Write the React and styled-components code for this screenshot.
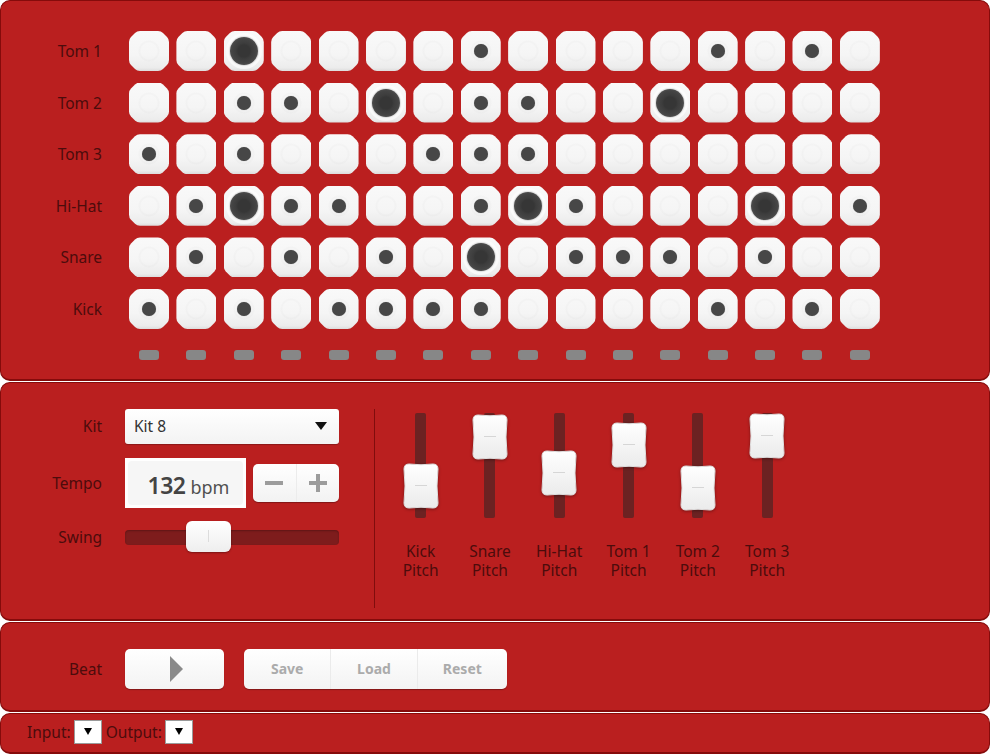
import React from "react"
import styled, { createGlobalStyle } from "styled-components"

const GlobalStyle = createGlobalStyle`
  body {
    margin: 0;
    background: #fff;
    font-family: "Noto Sans", "Open Sans", sans-serif;
  }
`

const Page = styled.div`
  width: 990px;
  display: flex;
  flex-direction: column;
  gap: 1px;
`

const Panel = styled.div`
  background: #ba1f1f;
  border: 1px solid #850b0b;
  border-bottom-width: 2px;
  border-radius: 10px;
  box-sizing: border-box;
  padding: ${p => p.pad};
`

const Label = styled.div`
  width: ${p => p.w || 101}px;
  text-align: right;
  font-size: 15.5px;
  color: #4c0c0c;
  flex-shrink: 0;
`

/* ---------- sequencer ---------- */

const Grid = styled.div`
  display: flex;
  flex-direction: column;
  gap: 11.6px;
`

const Row = styled.div`
  display: flex;
  align-items: center;
  gap: 27px;
`

const Pads = styled.div`
  display: flex;
  gap: 7.4px;
`

const Pad = styled.div`
  width: 40px;
  height: 40px;
  display: flex;
  align-items: center;
  justify-content: center;
  clip-path: path("M11 0 H29 Q32 0 34 2 L38 6 Q40 8 40 11 V29 Q40 32 38 34 L34 38 Q32 40 29 40 H11 Q8 40 6 38 L2 34 Q0 32 0 29 V11 Q0 8 2 6 L6 2 Q8 0 11 0 Z");
  background:
    radial-gradient(circle at 50% 50%, rgba(0,0,0,0) 0 8px, rgba(0,0,0,0.015) 9px 10px, rgba(0,0,0,0) 11px),
    linear-gradient(#f9f9f9 0%, #f5f5f5 60%, #ececec 92%, #dcdcdc 100%);
`

const Dot = styled.div`
  width: ${p => (p.big ? 28 : 14)}px;
  height: ${p => (p.big ? 28 : 14)}px;
  border-radius: 50%;
  background: ${p => (p.big
    ? "radial-gradient(circle, #363636 0 6px, #3d3d3d 8px, #444 12px, #4e4e4e 14px)"
    : "#474747")};
  box-shadow: ${p => (p.big
    ? "0 0 1px 1px rgba(0,0,0,0.12), 0 0 0 4px rgba(255,255,255,0.6)"
    : "0 0 1px rgba(0,0,0,0.4)")};
`

const Lights = styled.div`
  display: flex;
  gap: 7.4px;
  margin: 21px 0 0 128px;
`

const LightCell = styled.div`
  width: 40px;
  display: flex;
  justify-content: center;
`

const Light = styled.div`
  width: 20px;
  height: 10px;
  border-radius: 3px;
  background: #878787;
`

/* ---------- controls ---------- */

const Controls = styled.div`
  display: flex;
  align-items: flex-start;
`

const LeftCol = styled.div`
  display: flex;
  flex-direction: column;
  width: 338px;
`

const CtrlRow = styled.div`
  display: flex;
  align-items: center;
  gap: 23px;
  height: ${p => p.h}px;
  margin-top: ${p => p.mt || 0}px;
`

const Select = styled.div`
  width: 214px;
  height: 35px;
  box-sizing: border-box;
  border-radius: 3px;
  background: linear-gradient(#ffffff, #f3f3f3);
  box-shadow: 0 1px 1px rgba(0,0,0,0.25);
  display: flex;
  align-items: center;
  justify-content: space-between;
  padding: 0 12px 0 9px;
  font-size: 15.5px;
  color: #333;
`

const Caret = styled.span`
  width: 0;
  height: 0;
  border-left: 6px solid transparent;
  border-right: 6px solid transparent;
  border-top: 8px solid #111;
`

const TempoBox = styled.div`
  width: 121px;
  height: 50px;
  box-sizing: border-box;
  background: #fff;
  padding: 3px;
  display: flex;
`

const TempoInner = styled.div`
  flex: 1;
  border-radius: 4px;
  background: #f6f6f6;
  display: flex;
  align-items: baseline;
  justify-content: center;
  padding-top: 8px;
  box-sizing: border-box;
  gap: 5px;
  padding-left: 6px;
`

const Bpm = styled.span`
  font-size: 23px;
  font-weight: 600;
  color: #444;
  letter-spacing: -0.5px;
`

const Unit = styled.span`
  font-size: 18px;
  color: #505050;
`

const StepGroup = styled.div`
  display: flex;
  width: 86px;
  height: 38px;
  margin-left: -16px;
  border-radius: 5px;
  background: linear-gradient(#ffffff, #f2f2f2);
  box-shadow: 0 1px 1px rgba(0,0,0,0.3);
`

const StepBtn = styled.div`
  flex: 1;
  display: flex;
  align-items: center;
  justify-content: center;
  & + & {
    border-left: 1px solid #ececec;
  }
`

const Track = styled.div`
  position: relative;
  width: 214px;
  height: 15px;
  border-radius: 4px;
  background: #7e1c1c;
  box-shadow: inset 0 1px 2px rgba(0,0,0,0.25);
`

const Thumb = styled.div`
  position: absolute;
  left: 61px;
  top: -9px;
  width: 45px;
  height: 31px;
  border-radius: 6px;
  background: linear-gradient(#ffffff, #eeeeee);
  box-shadow: 0 1px 2px rgba(0,0,0,0.35);
  display: flex;
  align-items: center;
  justify-content: center;
  &::after {
    content: "";
    width: 1px;
    height: 12px;
    background: #dcdcdc;
  }
`

const Divider = styled.div`
  width: 1px;
  height: 199px;
  margin-left: 35px;
  background: #800d0d;
`

const Sliders = styled.div`
  display: flex;
  margin: 4px 0 0 11px;
`

const SliderCol = styled.div`
  width: 69.3px;
  display: flex;
  flex-direction: column;
  align-items: center;
`

const VTrack = styled.div`
  position: relative;
  width: 11px;
  height: 105px;
  background: #6c2222;
  border-radius: 2px;
`

const VHandle = styled.svg`
  position: absolute;
  left: -12.5px;
  top: ${p => p.top}px;
  filter: drop-shadow(0 1px 1.5px rgba(0,0,0,0.35));
`

const SliderLabel = styled.div`
  margin-top: 24px;
  text-align: center;
  color: #4c0c0c;
`

const SliderLine = styled.div`
  font-size: 15.5px;
  line-height: 19px;
  height: 19px;
  white-space: nowrap;
`

/* ---------- transport ---------- */

const Transport = styled.div`
  display: flex;
  align-items: center;
  gap: 23px;
`

const PlayBtn = styled.div`
  width: 99px;
  height: 40px;
  border-radius: 5px;
  background: linear-gradient(#ffffff, #f3f3f3);
  box-shadow: 0 1px 1px rgba(0,0,0,0.3);
  display: flex;
  align-items: center;
  justify-content: center;
  padding-left: 4px;
  box-sizing: border-box;
`

const BtnGroup = styled.div`
  display: flex;
  width: 263px;
  height: 40px;
  margin-left: -3px;
  border-radius: 5px;
  background: linear-gradient(#ffffff, #f3f3f3);
  box-shadow: 0 1px 1px rgba(0,0,0,0.3);
`

const GroupBtn = styled.div`
  width: ${p => p.w}px;
  display: flex;
  align-items: center;
  justify-content: center;
  font-size: 14px;
  font-weight: 700;
  color: #ababab;
  & + & {
    border-left: 1px solid #ebebeb;
  }
`

/* ---------- midi ---------- */

const Midi = styled.div`
  display: flex;
  align-items: center;
  font-size: 15.5px;
  color: #4c0c0c;
`

const MiniSelect = styled.div`
  width: 28px;
  height: 24px;
  box-sizing: border-box;
  border: 1px solid #9a9a9a;
  background: #fff;
  display: flex;
  align-items: center;
  justify-content: center;
  margin: 0 4px 0 3px;
`

const MiniCaret = styled.span`
  width: 0;
  height: 0;
  border-left: 4px solid transparent;
  border-right: 4px solid transparent;
  border-top: 7px solid #000;
`

const instruments = [
  { name: "Tom 1", s: [8, 13, 15], b: [3] },
  { name: "Tom 2", s: [3, 4, 8, 9], b: [6, 12] },
  { name: "Tom 3", s: [1, 3, 7, 8, 9], b: [] },
  { name: "Hi-Hat", s: [2, 4, 5, 8, 10, 16], b: [3, 9, 14] },
  { name: "Snare", s: [2, 4, 6, 10, 11, 12, 14], b: [8] },
  { name: "Kick", s: [1, 3, 5, 6, 7, 8, 13, 15], b: [] },
]

const steps = Array.from({ length: 16 }, (_, i) => i + 1)

const pitches = [
  { name: "Kick", top: 50 },
  { name: "Snare", top: 1 },
  { name: "Hi-Hat", top: 37 },
  { name: "Tom 1", top: 9 },
  { name: "Tom 2", top: 52 },
  { name: "Tom 3", top: 0 },
]

const Handle = ({ top }) => (
  <VHandle top={top} width="36" height="47" viewBox="0 0 36 47">
    <defs>
      <linearGradient id="hg" x1="0" y1="0" x2="0" y2="1">
        <stop offset="0" stopColor="#ffffff" />
        <stop offset="1" stopColor="#ebebeb" />
      </linearGradient>
    </defs>
    <path
      d="M6 1 Q18 2.5 30 1 Q35 1 35 6 Q33 23 35 40 Q35 45 30 45 Q18 43.5 6 45 Q1 45 1 40 Q3 23 1 6 Q1 1 6 1 Z"
      fill="url(#hg)"
      stroke="#dedede"
      strokeWidth="1"
    />
    <rect x="12" y="22" width="12" height="1" fill="#d6d6d6" />
  </VHandle>
)

const App = () => (
  <Page>
    <GlobalStyle />
    <Panel pad="30px 0 19px">
      <Grid>
        {instruments.map(inst => (
          <Row key={inst.name}>
            <Label>{inst.name}</Label>
            <Pads>
              {steps.map(n => (
                <Pad key={n}>
                  {inst.b.includes(n) && <Dot big />}
                  {inst.s.includes(n) && <Dot />}
                </Pad>
              ))}
            </Pads>
          </Row>
        ))}
      </Grid>
      <Lights>
        {steps.map(n => (
          <LightCell key={n}>
            <Light />
          </LightCell>
        ))}
      </Lights>
    </Panel>

    <Panel pad="26px 0 11px">
      <Controls>
        <LeftCol>
          <CtrlRow h={35}>
            <Label>Kit</Label>
            <Select>
              Kit 8
              <Caret />
            </Select>
          </CtrlRow>
          <CtrlRow h={50} mt={14}>
            <Label>Tempo</Label>
            <TempoBox>
              <TempoInner>
                <Bpm>132</Bpm>
                <Unit>bpm</Unit>
              </TempoInner>
            </TempoBox>
            <StepGroup>
              <StepBtn>
                <svg width="18" height="4" viewBox="0 0 18 4">
                  <rect width="18" height="4" fill="#9c9c9c" />
                </svg>
              </StepBtn>
              <StepBtn>
                <svg width="18" height="18" viewBox="0 0 18 18">
                  <rect y="7" width="18" height="4" fill="#9c9c9c" />
                  <rect x="7" width="4" height="18" fill="#9c9c9c" />
                </svg>
              </StepBtn>
            </StepGroup>
          </CtrlRow>
          <CtrlRow h={31} mt={14}>
            <Label>Swing</Label>
            <Track>
              <Thumb />
            </Track>
          </CtrlRow>
        </LeftCol>
        <Divider />
        <Sliders>
          {pitches.map(p => (
            <SliderCol key={p.name}>
              <VTrack>
                <Handle top={p.top} />
              </VTrack>
              <SliderLabel>
                <SliderLine>{p.name}</SliderLine>
                <SliderLine>Pitch</SliderLine>
              </SliderLabel>
            </SliderCol>
          ))}
        </Sliders>
      </Controls>
    </Panel>

    <Panel pad="26px 0 21px">
      <Transport>
        <Label>Beat</Label>
        <PlayBtn>
          <svg width="13" height="26" viewBox="0 0 13 26">
            <polygon points="0,0 13,13 0,26" fill="#8a8a8a" />
          </svg>
        </PlayBtn>
        <BtnGroup>
          <GroupBtn w={87}>Save</GroupBtn>
          <GroupBtn w={86}>Load</GroupBtn>
          <GroupBtn w={90}>Reset</GroupBtn>
        </BtnGroup>
      </Transport>
    </Panel>

    <Panel pad="6px 0 8px 26px">
      <Midi>
        Input:
        <MiniSelect>
          <MiniCaret />
        </MiniSelect>
        Output:
        <MiniSelect>
          <MiniCaret />
        </MiniSelect>
      </Midi>
    </Panel>
  </Page>
)

export default App
